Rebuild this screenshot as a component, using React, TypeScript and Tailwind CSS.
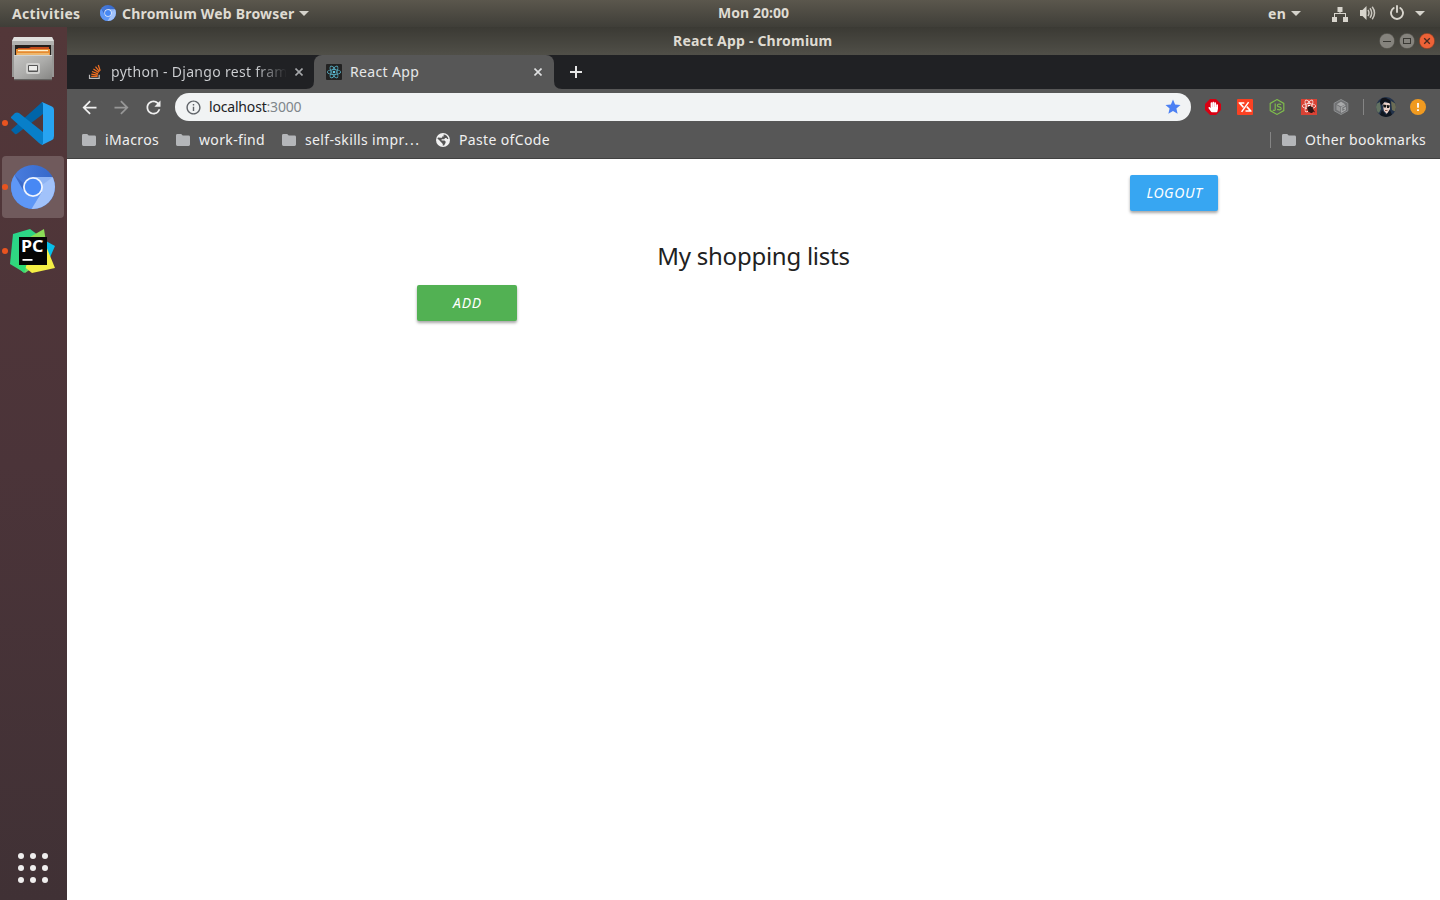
import React from "react";
import { MdInfoOutline, MdStar, MdArrowBack, MdArrowForward, MdRefresh } from "react-icons/md";
import { SiReact } from "react-icons/si";
import { FaHandPaper } from "react-icons/fa";

type LabelProps = { className?: string; children: React.ReactNode };

function Label({ className = "", children }: LabelProps) {
  return <span className={`block shrink-0 whitespace-nowrap ${className}`}>{children}</span>;
}

function Chromium({ size }: { size: number }) {
  return (
    <svg width={size} height={size} viewBox="0 0 44 44" className="shrink-0">
      <defs>
        <linearGradient id="chTop" x1="0" y1="0" x2="1" y2="0">
          <stop offset="0" stopColor="#4a7ee0" />
          <stop offset="1" stopColor="#3567c8" />
        </linearGradient>
        <clipPath id="chClip"><circle cx="22" cy="22" r="22" /></clipPath>
      </defs>
      <g clipPath="url(#chClip)">
        <rect width="44" height="44" fill="url(#chTop)" />
        <path d="M3.5 10 L13.3 27 L22 32 L30.5 27 L21 44 H0 V8 Z" fill="#5e97f6" />
        <path d="M22 12 H44 V44 H20.5 L30.7 27 Z" fill="#a1c2fa" />
        <path d="M22 12 H42 L31 20 Z" fill="#7ca5ee" opacity=".5" />
        <path d="M3.5 10 L13.3 27 L12 18 Z" fill="#3059b4" opacity=".5" />
      </g>
      <circle cx="22" cy="22" r="10" fill="#f1f5fd" />
      <circle cx="22" cy="22" r="8.2" fill="#4788f4" />
    </svg>
  );
}

function Files() {
  return (
    <svg width="44" height="46" viewBox="0 0 44 46">
      <defs>
        <linearGradient id="drawer" x1="0" y1="0" x2="1" y2="1">
          <stop offset="0" stopColor="#c4c4c2" />
          <stop offset=".5" stopColor="#acacaa" />
          <stop offset="1" stopColor="#858583" />
        </linearGradient>
      </defs>
      <path d="M3 1H41L43 5V41H1V5Z" fill="#989896" />
      <path d="M3 1H41L43 5H1Z" fill="#e0e0de" />
      <path d="M1 5H43V9H1Z" fill="#b2b2b0" />
      <rect x="4" y="9" width="36" height="11" fill="#25201d" />
      <path d="M7 12H18L20 11H38V14H6Z" fill="#c44c1d" />
      <rect x="5" y="13" width="34" height="6" fill="#e58b32" />
      <rect x="7" y="14" width="30" height="1.2" fill="#fff0cd" />
      <rect x="6" y="17" width="32" height="2" fill="#edb76e" />
      <path d="M3 19H41V44H3Z" fill="url(#drawer)" />
      <path d="M3 19H41V20H3Z" fill="#d3d3d1" />
      <path d="M3 43H41V44.2H3Z" fill="#656462" />
      <rect x="15" y="27" width="14" height="11" rx="2" fill="#d1d1cf" />
      <rect x="17" y="29" width="10" height="7" rx="1" fill="#555" />
      <rect x="18" y="30" width="8" height="4.5" fill="#ececea" />
    </svg>
  );
}

function Code() {
  return (
    <svg width="43" height="44" viewBox="0 0 43 44">
      <path d="M0 28L4 32Q5 33 7 31L32 12V0Q30 0 29 2L0 28Z" fill="#0065a9" />
      <path d="M0 15L4 11Q6 10 8 11L32 30V43Q30 43 28 41L0 16Z" fill="#087fc9" />
      <path d="M31 0L41 4.5Q43 5 43 8V34Q43 37 41 38L31 43Q32 42 32 40V3Q32 1 31 0Z" fill="#27a4f2" />
    </svg>
  );
}

function PyCharm() {
  return (
    <svg width="46" height="46" viewBox="0 0 46 46">
      <defs>
        <linearGradient id="pcGreen" x1="0" y1="0" x2="1" y2="1">
          <stop offset="0" stopColor="#24d58e" />
          <stop offset=".6" stopColor="#35d77b" />
          <stop offset="1" stopColor="#bcea51" />
        </linearGradient>
      </defs>
      <path d="M34 12L45 18L38 34L30 28Z" fill="#07bfea" />
      <path d="M3 6L20 1L32 10L25 38L15 45L0 36Z" fill="url(#pcGreen)" />
      <path d="M20 9L34 1L36 14Z" fill="#8bdc57" />
      <path d="M36 18L45 40L22 45L12 37Z" fill="#f5ef45" />
      <path d="M4 36L18 32L14 45Z" fill="#2fdc74" />
      <rect x="9" y="9" width="28" height="28" fill="#050505" />
      <text x="11" y="23.5" fontFamily="Noto Sans, sans-serif" fontSize="15.5" fontWeight="700" fill="#fff" textLength="22.5" lengthAdjust="spacingAndGlyphs">PC</text>
      <rect x="12.5" y="31" width="10" height="1.8" fill="#fff" />
    </svg>
  );
}

function Caret() {
  return <svg width="10" height="5" viewBox="0 0 10 5" className="shrink-0"><path d="M0 0H10L5 5Z" fill="#d5d3cc" /></svg>;
}

function Folder() {
  return (
    <svg width="14" height="12" viewBox="0 0 14 12" className="shrink-0">
      <path d="M1.4 0H5.2L6.7 1.6H12.6Q14 1.6 14 3V10.6Q14 12 12.6 12H1.4Q0 12 0 10.6V1.4Q0 0 1.4 0Z" fill="#b4b6b9" />
    </svg>
  );
}

function Close({ color }: { color: string }) {
  return <svg width="8" height="8" viewBox="0 0 8 8" className="shrink-0"><path d="M.5.5L7.5 7.5M7.5.5L.5 7.5" stroke={color} strokeWidth="1.6" /></svg>;
}

function StackMark() {
  return (
    <svg width="16" height="16" viewBox="0 0 16 16" className="shrink-0">
      <path d="M2.5 10.7V14.4H12.2V10.7" fill="none" stroke="#bcbbbb" strokeWidth="1.2" />
      <path d="M4.2 12.3H10.6M4.3 10.1L10.7 11.2M5 7.5L11.1 9.8M6.4 4.9L11.8 8.5M8.5 2.7L12.5 7.6M11.3 1L13.2 6.8" stroke="#f06f22" strokeWidth="1.25" />
    </svg>
  );
}

function Globe() {
  return (
    <svg width="14" height="14" viewBox="0 0 14 14" className="shrink-0">
      <circle cx="7" cy="7" r="7" fill="#f2f2f2" />
      <path d="M7.6 1.5C9.8 1.5 12 3.4 12.4 6H10.8V4.9H9.2L8.1 6.2H5.6V7.4H8.5L9.6 8.5V9.8L8.1 12.5H6.5V10.6L4.9 9.3L3 7L1.4 5.8L2 4.4L4.3 4.8H6.1V3.4H7.6Z" fill="#575757" />
      <path d="M1.4 6.1L5.3 9.6V11H6.6V12.6C3.5 12.5 1.2 9.7 1.4 6.1Z" fill="#f2f2f2" />
    </svg>
  );
}

function TopBar() {
  return (
    <header className="flex h-[27px] shrink-0 items-center bg-linear-to-b from-[#5b574d] to-[#3f3e38] pl-3 text-[14px] font-bold text-[#dfdbd2]">
      <Label className="w-[88px] tracking-[0.35px]">Activities</Label>
      <div className="-translate-y-px"><Chromium size={16} /></div>
      <Label className="ml-[6px] w-[177px] tracking-[0.2px]">Chromium Web Browser</Label>
      <Caret />
      <Label className="ml-[409px] w-[550px] -translate-y-px tracking-[0.05px]">Mon 20:00</Label>
      <Label className="w-[23px] tracking-[0.3px]">en</Label>
      <Caret />
      <svg width="16" height="16" viewBox="0 0 16 16" className="ml-[31px] shrink-0" fill="#d8d5cd">
        <path d="M5.5 1h5v5h-2v1H14v4h2v5h-5v-5h2V8H3v3h2v5H0v-5h2V7h5.5V6h-2z" />
      </svg>
      <svg width="16" height="14" viewBox="0 0 16 14" className="ml-3 shrink-0 -translate-y-px">
        <path d="M0 4H2.5L6.5 0V14L2.5 10H0Z" fill="#d8d5cd" />
        <path d="M8 4Q10 7 8 10M10 2.3Q13.4 7 10 11.7M12.2.8Q16.8 7 12.2 13.2" stroke="#c9c6be" strokeWidth="1.5" fill="none" />
      </svg>
      <svg width="14" height="15" viewBox="0 0 14 15" className="ml-[14px] shrink-0 -translate-y-px" fill="none" stroke="#d8d5cd" strokeWidth="1.9" strokeLinecap="round">
        <path d="M7 1V7M3.7 3A6 6 0 1 0 10.3 3" />
      </svg>
      <div className="ml-[11px]"><Caret /></div>
    </header>
  );
}

function DockItem({ active = false, children }: { active?: boolean; children: React.ReactNode }) {
  return (
    <div className={`flex h-[62px] w-[62px] shrink-0 items-center rounded-[4px] ${active ? "bg-[#705a5c]" : ""}`}>
      <span className="h-[6px] w-[6px] shrink-0 rounded-full bg-[#e95420]" />
      <div className="flex w-[50px] items-center justify-center">{children}</div>
    </div>
  );
}

function Dock() {
  return (
    <aside className="flex w-[67px] shrink-0 flex-col bg-linear-to-b from-[#533739] via-[#4b3439] to-[#403135] pl-[2px]">
      <div className="flex h-[65px] w-[62px] justify-center pt-[9px]"><Files /></div>
      <DockItem><div className="-ml-px translate-y-px"><Code /></div></DockItem>
      <div className="mt-[2px]"><DockItem active><Chromium size={44} /></DockItem></div>
      <div className="mt-[2px]"><DockItem><PyCharm /></DockItem></div>
      <div className="mt-auto mb-[17px] ml-4 grid w-[30px] grid-cols-3 gap-[6px]">
        {Array.from({ length: 9 }, (_, i) => <span key={i} className="h-[6px] w-[6px] rounded-full bg-[#f0eeee]" />)}
      </div>
    </aside>
  );
}

function WindowButtons() {
  return (
    <div className="ml-auto flex gap-1 pr-[5px]">
      <svg width="16" height="16" viewBox="0 0 16 16"><circle cx="8" cy="8" r="7.7" fill="#85837d" stroke="#45433d" strokeWidth=".6" /><path d="M4 8.5H12" stroke="#393833" /></svg>
      <svg width="16" height="16" viewBox="0 0 16 16"><circle cx="8" cy="8" r="7.7" fill="#85837d" stroke="#45433d" strokeWidth=".6" /><rect x="4.5" y="5.5" width="7" height="5" fill="none" stroke="#393833" /></svg>
      <svg width="16" height="16" viewBox="0 0 16 16"><circle cx="8" cy="8" r="7.7" fill="#ed6237" stroke="#773a23" strokeWidth=".6" /><path d="M5.2 5.2L10.8 10.8M10.8 5.2L5.2 10.8" stroke="#482a20" strokeWidth="1.3" /></svg>
    </div>
  );
}

function Tabs() {
  return (
    <div className="flex h-[34px] shrink-0 items-center bg-[#202124] text-[14px] text-[#e6e7e8]">
      <div className="flex h-full w-[247px] items-center rounded-br-[8px] pl-5">
        <StackMark />
        <Label className="ml-2 w-[176px] -translate-y-px overflow-hidden bg-linear-to-r from-[#cfd1d4] from-[82%] to-transparent bg-clip-text tracking-[0.3px] text-transparent">python - Django rest fram</Label>
        <div className="ml-2"><Close color="#a5a7aa" /></div>
      </div>
      <div className="relative flex h-full w-[240px] items-center rounded-t-[8px] bg-[#575757] pl-3">
        <svg width="8" height="8" className="absolute bottom-0 -left-2"><path d="M8 0V8H0Q8 8 8 0Z" fill="#575757" /></svg>
        <svg width="8" height="8" className="absolute -right-2 bottom-0"><path d="M0 0V8H8Q0 8 0 0Z" fill="#575757" /></svg>
        <span className="flex h-4 w-4 items-center justify-center rounded-[1px] bg-[#222222] text-[#5fc5de]"><SiReact size={14} /></span>
        <Label className="ml-2 w-[184px] -translate-y-px tracking-[0.35px]">React App</Label>
        <Close color="#dfe0e1" />
      </div>
      <svg width="12" height="12" className="ml-4"><path d="M6 0V12M0 6H12" stroke="#e5e5e5" strokeWidth="2" /></svg>
    </div>
  );
}

function Avatar() {
  return (
    <svg width="20" height="20" viewBox="0 0 20 20" className="shrink-0">
      <defs><clipPath id="face"><circle cx="10" cy="10" r="10" /></clipPath></defs>
      <g clipPath="url(#face)">
        <rect width="20" height="20" fill="#22324a" />
        <path d="M0 7L4 5L5 12L3 16L0 14Z" fill="#627161" />
        <path d="M15 4L20 7V15L16 13Z" fill="#6c6d56" />
        <path d="M6 5L14 6L14 12L11 17L8 14Z" fill="#edd2c9" />
        <path d="M4 5Q5 0 10 1L14 3L14.5 7L9 4L7 7L5 8Z" fill="#101219" />
        <path d="M7 7.5L10.5 8L10 10.5H7.5ZM11 8L14 8.5L13 11H11Z" fill="#151515" />
        <path d="M3 20L6 13L10 18L14 13L17 20Z" fill="#101720" />
        <path d="M9 13.5H11.5" stroke="#91604f" />
      </g>
    </svg>
  );
}

function Toolbar() {
  return (
    <div className="flex h-9 shrink-0 items-center bg-[#575757] pl-3">
      <MdArrowBack size={21} className="-mr-px shrink-0 text-[#f0f0f0]" />
      <MdArrowForward size={21} className="-mr-px ml-3 shrink-0 text-[#979797]" />
      <MdRefresh size={21} className="-mr-px ml-3 shrink-0 text-[#f0f0f0]" />
      <div className="ml-3 flex h-7 w-[1016px] shrink-0 items-center rounded-full bg-[#f1f3f4] pl-[10px] text-[14px] text-[#202124]">
        <MdInfoOutline size={17} className="shrink-0 text-[#5f6368]" />
        <Label className="ml-[7px] -translate-y-px tracking-[-0.18px]">localhost<span className="text-[#80868b]">:3000</span></Label>
        <MdStar size={18} className="mr-[9px] ml-auto text-[#4c80f3]" />
      </div>
      <div className="ml-[14px] flex shrink-0 items-center gap-4">
        <svg width="16" height="16" viewBox="0 0 16 16">
          <path d="M5 0H11L16 5V11L11 16H5L0 11V5Z" fill="#d90012" />
          <FaHandPaper x="2.7" y="2.5" size={11} color="#fff" />
        </svg>
        <svg width="16" height="16" viewBox="0 0 16 16">
          <rect width="16" height="16" rx="1" fill="#fb4122" />
          <path d="M1.6 3.2H7.3V4.8H4.4L7 7.7L6 8.9L1.6 4.3ZM11 2.7L12.2 3.5L5.2 13.2L4 12.4ZM10.4 7L14.6 11.7V12.8H8.5V11.2H12L9.3 8.3Z" fill="#fff" />
        </svg>
        <svg width="16" height="16" viewBox="0 0 16 16" fill="none" stroke="#7fbd4c" strokeWidth="1.15"><path d="M8 .6L14.8 4.4V11.6L8 15.4L1.2 11.6V4.4ZM6.2 4.6V10.4Q6.2 12.2 3.8 11M12.2 5.5Q8.3 4.5 8.3 6.5C8.3 8.4 12.2 7.2 12.2 9.4Q12.2 11.6 8.1 10.4" /></svg>
        <svg width="16" height="16" viewBox="0 0 16 16">
          <rect width="16" height="16" fill="#d94234" />
          <SiReact x="1" y="0" size={14} color="#fff" />
          <ellipse cx="9.5" cy="10.5" rx="2.7" ry="3.7" transform="rotate(-35 9.5 10.5)" fill="#301715" />
          <path d="M6 9L13 11.5M7 13L12 8M9 7L10.5 14M12 12L14 13" stroke="#301715" strokeWidth=".8" />
        </svg>
        <svg width="16" height="16" viewBox="0 0 16 16">
          <path d="M8 .5L14.8 4.2V11.8L8 15.5L1.2 11.8V4.2Z" fill="#717274" stroke="#8d8f91" />
          <path d="M8 2.8L12.2 5.2L8 7.6L3.8 5.2Z" fill="#a9aaab" />
          <path d="M3.5 6L7.4 8.3V13L3.5 10.7Z" fill="#969798" />
          <path d="M12.3 6.2L8.7 8.3V13L12.3 10.9V8.8L10.5 9.8" fill="none" stroke="#a9aaab" strokeWidth="1.2" />
        </svg>
      </div>
      <span className="ml-[14px] h-4 w-px shrink-0 bg-[#858585]" />
      <div className="ml-[12px]"><Avatar /></div>
      <svg width="16" height="16" viewBox="0 0 16 16" className="ml-[14px] shrink-0"><circle cx="8" cy="8" r="8" fill="#f09a20" /><path d="M8 4V8.7M8 10.3V12" stroke="#fff" strokeWidth="1.8" /></svg>
    </div>
  );
}

function Bookmarks() {
  return (
    <div className="flex h-[34px] shrink-0 items-center border-b border-[#414141] bg-[#575757] pr-[14px] pb-[4px] pl-[15px] text-[14px] tracking-[0.35px] text-[#f0f0f0]">
      <Folder /><Label className="ml-[9px] w-[71px]">iMacros</Label>
      <Folder /><Label className="ml-[9px] w-[83px]">work-find</Label>
      <Folder /><Label className="ml-[9px] w-[131px]">self-skills impr<span className="tracking-[1.6px]">...</span></Label>
      <Globe />
      <Label className="ml-[9px]">Paste ofCode</Label>
      <div className="ml-auto flex items-center">
        <span className="mr-[11px] h-4 w-px bg-[#858585]" />
        <Folder /><Label className="ml-[9px] w-[121px]">Other bookmarks</Label>
      </div>
    </div>
  );
}

function ShoppingLists() {
  return (
    <main className="flex flex-1 flex-col bg-white pt-4 text-[#212121]">
      <button className="mr-[222px] h-9 w-[88px] self-end rounded-[2px] bg-[#37a6f2] pb-[2px] pl-px text-center text-[14px] tracking-[0.6px] text-white italic shadow-[0_2px_3px_rgba(0,0,0,.35)]">LOGOUT</button>
      <h1 className="mt-[28px] h-[35px] text-center text-[24px] leading-[34px] font-normal tracking-[-0.25px]">My shopping lists</h1>
      <button className="mt-[11px] ml-[350px] h-9 w-[100px] rounded-[2px] bg-[#52b153] pb-[2px] pl-px text-center text-[14px] tracking-[0.8px] text-white italic shadow-[0_2px_3px_rgba(0,0,0,.35)]">ADD</button>
    </main>
  );
}

export default function App() {
  return (
    <div className="flex h-[900px] w-[1440px] flex-col overflow-hidden font-['Noto_Sans',sans-serif]">
      <TopBar />
      <div className="flex min-h-0 flex-1">
        <Dock />
        <section className="flex w-[1373px] flex-col">
          <div className="flex h-7 shrink-0 items-center bg-linear-to-b from-[#3b3a34] to-[#504f48] pl-[606px] text-[14px] font-bold text-[#dfdbd2]">
            <Label className="-translate-y-px tracking-[0.2px]">React App - Chromium</Label>
            <WindowButtons />
          </div>
          <Tabs />
          <Toolbar />
          <Bookmarks />
          <ShoppingLists />
        </section>
      </div>
    </div>
  );
}
